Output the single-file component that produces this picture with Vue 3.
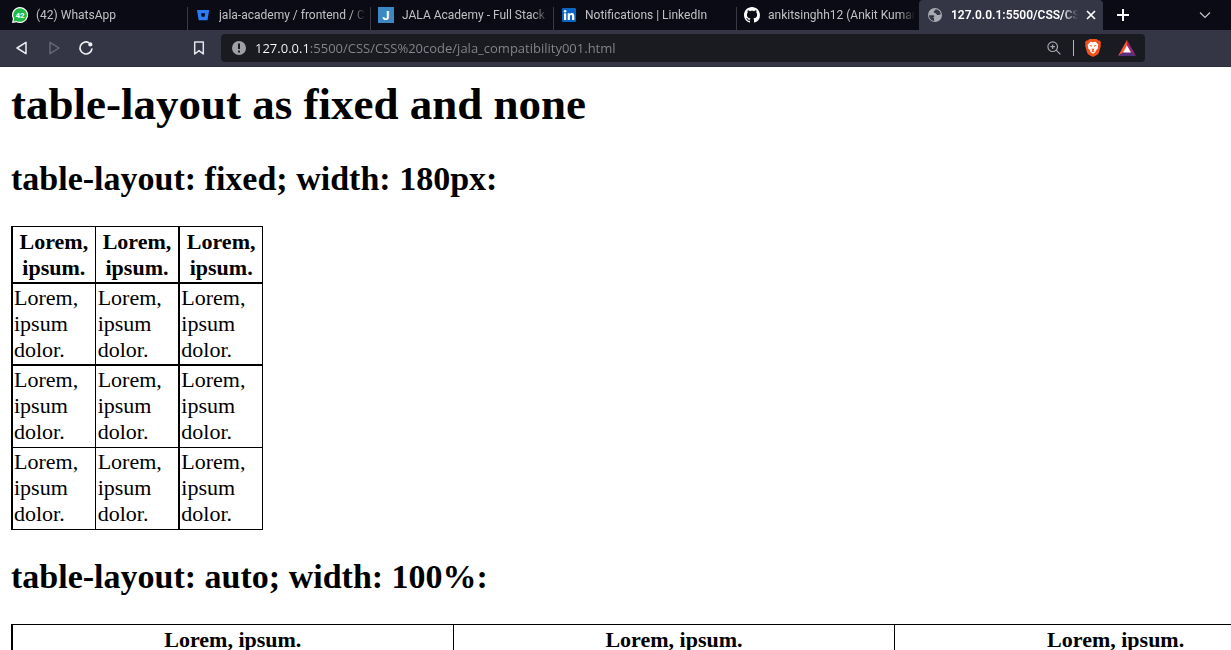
<script setup>
import { ref } from 'vue'

const url = ref('127.0.0.1:5500/CSS/CSS%20code/jala_compatibility001.html')
const tabs = [
  { icon: 'whatsapp', title: '(42) WhatsApp' },
  { icon: 'bitbucket', title: 'jala-academy / frontend / C' },
  { icon: 'jala', title: 'JALA Academy - Full Stack D' },
  { icon: 'linkedin', title: 'Notifications | LinkedIn' },
  { icon: 'github', title: 'ankitsinghh12 (Ankit Kumar' },
  { icon: 'globe', title: '127.0.0.1:5500/CSS/CSS', active: true },
]
const columns = 3
const rows = 3
</script>

<template>
  <div class="browser">
    <header class="chrome">
      <div class="tab-strip">
        <div v-for="tab in tabs" :key="tab.icon" class="tab" :class="{ active: tab.active }">
          <button type="button" class="tab-main">
            <svg v-if="tab.icon === 'whatsapp'" class="favicon" viewBox="0 0 16 16">
              <path d="M8 0a8 8 0 1 1-3.4 15.2L0 16l.9-4.3A8 8 0 0 1 8 0z" fill="#fff" />
              <path d="M8 1.200a6.800 6.800 0 1 1-3.300 12.700l-3.200.7.7-3.100A6.800 6.800 0 0 1 8 1.200z" fill="#1fba45" />
              <text x="8" y="10.800" class="badge">42</text>
            </svg>
            <svg v-else-if="tab.icon === 'bitbucket'" class="favicon" viewBox="0 0 16 16">
              <path d="M2 3h12.200l-1.700 10.200H3.700z" fill="#2a7df5" />
              <path d="M6 6.300h4.200l-.7 3.500H6.700z" fill="#0b0b15" />
            </svg>
            <svg v-else-if="tab.icon === 'jala'" class="favicon" viewBox="0 0 16 16">
              <rect width="16" height="16" fill="#3b88c3" />
              <text x="8" y="12.500" class="letter">J</text>
            </svg>
            <svg v-else-if="tab.icon === 'linkedin'" class="favicon" viewBox="0 0 16 16">
              <rect x="1" y="1" width="14" height="14" rx="1" fill="#0a66c2" />
              <rect x="3" y="6.300" width="2.200" height="6.700" fill="#fff" />
              <circle cx="4.100" cy="4.200" r="1.300" fill="#fff" />
              <path d="M6.700 6.300h2.100v1c.4-.7 1.100-1.200 2.100-1.200 1.800 0 2.400 1.200 2.400 2.900v4h-2.200V9.400c0-.9-.2-1.500-1-1.500s-1.200.6-1.200 1.500V13H6.700z" fill="#fff" />
            </svg>
            <svg v-else-if="tab.icon === 'github'" class="favicon" viewBox="0 0 16 16">
              <path fill="#fff" d="M8 0C3.580 0 0 3.580 0 8c0 3.540 2.290 6.530 5.470 7.590.4.070.55-.17.55-.38 0-.19-.01-.82-.01-1.490-2.010.37-2.530-.49-2.690-.94-.09-.23-.48-.94-.82-1.130-.28-.15-.68-.52-.01-.53.63-.01 1.080.58 1.230.82.72 1.210 1.870.87 2.330.66.070-.52.28-.87.51-1.070-1.780-.2-3.640-.89-3.640-3.950 0-.87.31-1.590.82-2.150-.08-.2-.36-1.020.08-2.120 0 0 .67-.21 2.200.82.64-.18 1.320-.27 2-.27s1.360.09 2 .27c1.530-1.040 2.200-.82 2.200-.82.44 1.100.16 1.920.08 2.120.51.56.82 1.270.82 2.150 0 3.070-1.870 3.750-3.650 3.950.29.25.54.73.54 1.480 0 1.070-.01 1.930-.01 2.200 0 .21.15.46.55.38A8.010 8.010 0 0 0 16 8c0-4.420-3.580-8-8-8z" />
            </svg>
            <svg v-else class="favicon" viewBox="0 0 16 16">
              <circle cx="8" cy="8" r="7" fill="#a9abb2" />
              <path d="M2 8.300h4.200c1.500 0 1.500 2.100.1 2.300l.8 1.100v2.200C4 13.800 2 11.200 2 8.300zM8.700 2.200c-.2 1.500-2 1.300-2 2.600 0 1.500 2.100.8 2.700 2.100.5 1.200 1.300 1.400 2.300 1.100l2.100-.7c-.1-2.600-2.400-5-5.100-5.100z" fill="#353747" />
            </svg>
            <span class="tab-title">{{ tab.title }}</span>
          </button>
          <button v-if="tab.active" type="button" class="close" aria-label="Close tab">
            <svg viewBox="0 0 10 10" width="10" height="10"><path d="M1 1l8 8M9 1L1 9" stroke="#fff" stroke-width="1.700" /></svg>
          </button>
        </div>
        <button type="button" class="new-tab" aria-label="New tab">
          <svg viewBox="0 0 12 12" width="12" height="12"><path d="M6 0v12M0 6h12" stroke="#fff" stroke-width="2" /></svg>
        </button>
        <button type="button" class="tab-menu" aria-label="Search tabs">
          <svg viewBox="0 0 12 8" width="12" height="8"><path d="M1 1.500l5 5 5-5" fill="none" stroke="#c9cad0" stroke-width="1.100" /></svg>
        </button>
      </div>

      <div class="toolbar">
        <div class="nav">
          <button type="button" aria-label="Back">
            <svg viewBox="0 0 16 16" width="16" height="16"><path d="M12 2.300v11.400L3 8z" fill="none" stroke="#eceef2" stroke-width="1.500" stroke-linejoin="round" /></svg>
          </button>
          <button type="button" aria-label="Forward">
            <svg viewBox="0 0 16 16" width="16" height="16"><path d="M4 2.300v11.400L13 8z" fill="none" stroke="#686a76" stroke-width="1.400" stroke-linejoin="round" /></svg>
          </button>
          <button type="button" aria-label="Reload">
            <svg viewBox="0 0 16 16" width="16" height="16">
              <path d="M10.500 2.500A6 6 0 1 0 13.900 9" fill="none" stroke="#eceef2" stroke-width="1.600" stroke-linecap="round" />
              <circle cx="12.300" cy="4.400" r="2.100" fill="#eceef2" />
            </svg>
          </button>
        </div>
        <button type="button" class="bookmark" aria-label="Bookmark this page">
          <svg viewBox="0 0 16 16" width="16" height="16"><path d="M3.700 2h8.600v12L8 10.600 3.700 14z" fill="none" stroke="#e4e5ea" stroke-width="1.500" stroke-linejoin="round" /></svg>
        </button>
        <div class="address">
          <svg class="info" viewBox="0 0 14 14" width="14" height="14">
            <circle cx="7" cy="7" r="7" fill="#9ea0a5" />
            <path d="M6 2.500h2v5.500H6zM6 9.500h2v2H6z" fill="#191b21" />
          </svg>
          <input v-model="url" class="url" type="text" aria-label="Address" spellcheck="false" />
          <button type="button" class="zoom" aria-label="Zoom">
            <svg viewBox="0 0 14 14" width="14" height="14">
              <g fill="none" stroke="#a5a7ac" stroke-width="1.200"><circle cx="5.700" cy="5.700" r="4.800" /><path d="M9.200 9.200l4.200 4.200M5.700 3.400v4.600M3.400 5.700H8" /></g>
            </svg>
          </button>
          <span class="divider"></span>
          <button type="button" class="shield" aria-label="Brave Shields">
            <svg viewBox="0 0 16 18" width="16" height="18">
              <path d="M4.300 0h7.400l1.500 1.500 1.600-.1 1.200 2.200-.5 1.500.4 1.400-2 7.200-1.200 1.700L8 18l-4.700-2.600-1.200-1.700-2-7.200.4-1.400L0 3.600l1.200-2.200 1.600.1z" fill="#f2521b" />
              <path d="M5.400 2.800L8 3.300l2.600-.5 2.700 2.900-.6 3.800-2.100 2.300.2 1L8 14.700l-2.800-1.900.2-1-2.100-2.300-.6-3.800z" fill="#fff" />
              <path d="M4.300 6l2.600.5-.5 1.600zM11.700 6l-2.600.5.5 1.600zM6.700 9.300L8 10l1.300-.7-.5 1.900H7.200zM6.200 12.200L8 11.300l1.800.9L8 13.200z" fill="#f2521b" />
            </svg>
          </button>
          <button type="button" class="rewards" aria-label="Brave Rewards">
            <svg viewBox="0 0 18 16" width="18" height="16">
              <path d="M9 0L0 16l9-5.500z" fill="#ff5138" />
              <path d="M9 0l9 16-9-5.500z" fill="#9b2474" />
              <path d="M0 16h18l-9-6z" fill="#55307f" />
              <path d="M9 5.600l4 7H5z" fill="#fff" />
            </svg>
          </button>
        </div>
      </div>
    </header>

    <main class="page">
      <h1>table-layout as fixed and none</h1>
      <h2>table-layout: fixed; width: 180px:</h2>
      <table class="fixed">
        <thead>
          <tr><th v-for="c in columns" :key="c" scope="col">Lorem, ipsum.</th></tr>
        </thead>
        <tbody>
          <tr v-for="r in rows" :key="r"><td v-for="c in columns" :key="c">Lorem, ipsum dolor.</td></tr>
        </tbody>
      </table>
      <h2>table-layout: auto; width: 100%:</h2>
      <table class="auto">
        <thead>
          <tr><th v-for="c in columns" :key="c" scope="col">Lorem, ipsum.</th></tr>
        </thead>
      </table>
    </main>
  </div>
</template>

<style>
html,
body,
#app {
  height: 100%;
}
body {
  margin: 0;
  overflow: hidden;
  background: #fff;
}
</style>

<style scoped>
.browser {
  display: flex;
  flex-direction: column;
  height: 100%;
  overflow: hidden;
}
.chrome {
  flex: none;
  font-family: "Open Sans", "Noto Sans", sans-serif;
}
button {
  display: flex;
  align-items: center;
  justify-content: center;
  padding: 0;
  border: 0;
  background: none;
  color: inherit;
  font: inherit;
}
svg {
  display: block;
  flex: none;
}
.tab-strip {
  display: flex;
  height: 30px;
  padding-left: 4px;
  background: #0b0b15;
  color: #c1c1c5;
  font-family: Roboto, "Open Sans", sans-serif;
  font-size: 12px;
}
.tab {
  display: flex;
  align-items: center;
  flex: 0 1 183px;
  min-width: 0;
  box-sizing: border-box;
  padding-right: 4px;
  background: linear-gradient(#3a3a43, #3a3a43) left bottom / 1px 23px no-repeat;
}
.tab:first-child {
  background: none;
}
.tab.active {
  flex-basis: 184px;
  padding-right: 7px;
  border-radius: 4px 4px 0 0;
  background: #343646;
  color: #fff;
  font-weight: 600;
}
.tab-main {
  flex: 1;
  min-width: 0;
  height: 30px;
  gap: 8px;
  padding-left: 8px;
}
.favicon {
  width: 16px;
  height: 16px;
}
.badge {
  fill: #fff;
  font-size: 8px;
  font-weight: 700;
  text-anchor: middle;
}
.letter {
  fill: #fff;
  font-size: 13px;
  font-weight: 700;
  text-anchor: middle;
}
.tab-title {
  flex: 1;
  min-width: 0;
  overflow: hidden;
  text-align: left;
  white-space: nowrap;
  mask-image: linear-gradient(to left, transparent, #000 16px);
}
.close {
  width: 10px;
  height: 30px;
  margin-left: 8px;
}
.new-tab {
  width: 40px;
}
.tab-menu {
  width: 12px;
  margin-left: auto;
  margin-right: 20px;
}
.toolbar {
  display: flex;
  align-items: center;
  height: 37px;
  box-sizing: border-box;
  padding: 0 86px 0 14px;
  border-bottom: 1px solid #2b2d39;
  background: #343646;
}
.nav {
  display: flex;
  gap: 16px;
}
.bookmark {
  margin-left: 97px;
}
.address {
  display: flex;
  align-items: center;
  flex: 1;
  height: 28px;
  min-width: 0;
  box-sizing: border-box;
  margin-left: 14px;
  padding: 0 9px 0 11px;
  border-radius: 4px;
  background: #191b21;
}
.url {
  flex: 1;
  min-width: 0;
  height: 28px;
  margin-left: 9px;
  padding: 0;
  border: 0;
  outline: 0;
  background: linear-gradient(to right, #fff 54px, #85878c 54px);
  background-clip: text;
  color: transparent;
  font-family: inherit;
  font-size: 13px;
}
.divider {
  width: 1px;
  height: 16px;
  margin: 0 11px 0 12px;
  background: #b5b6ba;
}
.rewards {
  margin-left: 17px;
}
.page {
  flex: 1;
  padding: 11px;
  color: #000;
  font-family: "Liberation Serif", "Times New Roman", serif;
  font-size: 22px;
  line-height: 26px;
}
h1 {
  margin: 0 0 29px;
  font-size: 45px;
  line-height: 52px;
}
h2 {
  margin: 27px 0 28px;
  font-size: 34px;
  line-height: 39px;
}
table {
  border-spacing: 0;
  border-right: 1px solid #000;
  border-bottom: 1px solid #000;
  table-layout: fixed;
}
.fixed {
  width: 252px;
}
.auto {
  width: 100%;
  min-width: 1326px;
}
th,
td {
  padding: 1px 1px 1px 2px;
  border-top: 1px solid #000;
  border-left: 1px solid #000;
  text-align: left;
}
th {
  padding: 2px 1px 1px;
  text-align: center;
}
th:first-child,
td:first-child,
.fixed th:last-child,
.fixed td:last-child {
  border-left-width: 2px;
}
td:first-child,
td:last-child {
  padding-left: 1px;
}
.fixed tbody tr:not(:last-child) td {
  border-top-width: 2px;
}
.fixed tbody tr:not(:first-child) td {
  padding-bottom: 2px;
}
</style>
